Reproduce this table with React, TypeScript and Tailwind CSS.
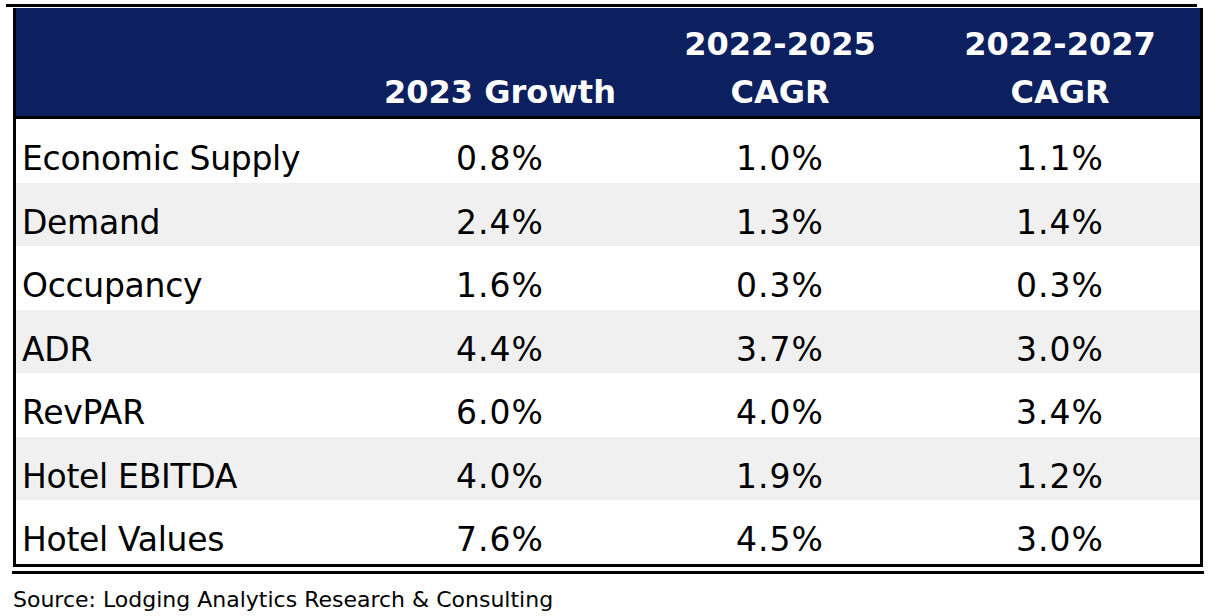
import React from "react";

const rows = [
  ["Economic Supply", "0.8%", "1.0%", "1.1%"],
  ["Demand", "2.4%", "1.3%", "1.4%"],
  ["Occupancy", "1.6%", "0.3%", "0.3%"],
  ["ADR", "4.4%", "3.7%", "3.0%"],
  ["RevPAR", "6.0%", "4.0%", "3.4%"],
  ["Hotel EBITDA", "4.0%", "1.9%", "1.2%"],
  ["Hotel Values", "7.6%", "4.5%", "3.0%"],
];

export default function App() {
  return (
    <div
      className="w-[1212px] h-[616px] bg-white overflow-hidden pt-[4px]"
      style={{ fontFamily: '"DejaVu Sans", sans-serif' }}
    >
      <div className="ml-[6px] w-[1191px] h-[3px] bg-black" />
      <div className="ml-[13px] mt-[1px] w-[1190px] border-x-[3px] border-b-[3px] border-black">
        <div className="h-[111px] bg-[#0c1f5f] border-b-[3px] border-black flex text-white font-bold text-[32px] leading-[48px]">
          <div className="w-[344px]" />
          <div className="w-[280px] flex flex-col justify-end items-center pb-[0px]">
            <div>2023 Growth</div>
          </div>
          <div className="w-[280px] flex flex-col justify-end items-center pb-[0px]">
            <div>2022-2025</div>
            <div>CAGR</div>
          </div>
          <div className="w-[280px] flex flex-col justify-end items-center pb-[0px]">
            <div>2022-2027</div>
            <div>CAGR</div>
          </div>
        </div>
        {rows.map((r, i) => (
          <div
            key={i}
            className={`flex items-center pt-[16px] text-[33px] leading-[40px] text-black ${
              i % 2 === 1 ? "bg-[#f0f0f0]" : "bg-white"
            } ${i % 2 === 0 ? "h-[64px]" : "h-[63px]"}`}
          >
            <div className="w-[344px] pl-[6px] tracking-[-0.3px]">{r[0]}</div>
            <div className="w-[280px] text-center tracking-[1px]">{r[1]}</div>
            <div className="w-[280px] text-center tracking-[1px]">{r[2]}</div>
            <div className="w-[280px] text-center tracking-[1px]">{r[3]}</div>
          </div>
        ))}
      </div>
      <div className="ml-[12px] mt-[4px] w-[1192px] h-[3px] bg-black" />
      <div className="ml-[13px] mt-[12px] text-[22px] leading-[28px] text-black">
        Source: Lodging Analytics Research &amp; Consulting
      </div>
    </div>
  );
}
